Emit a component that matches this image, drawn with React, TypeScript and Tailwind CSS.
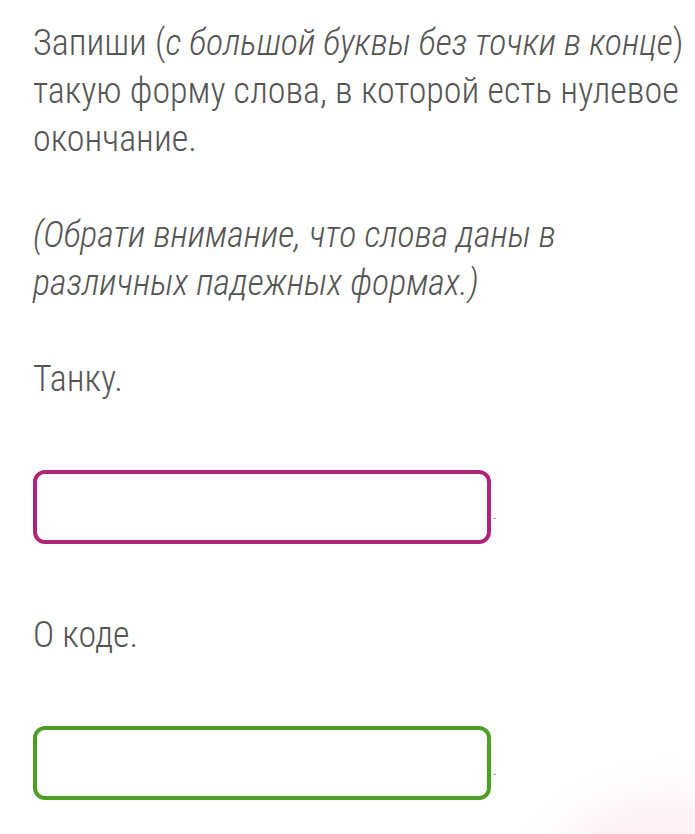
import React from 'react';

// answer box with the trailing period
const AnswerBox = ({ color }: { color: string }) => (
  <div className="flex items-center">
    <div className={`w-[458px] h-[74px] rounded-[12px] border-[4px] ${color}`} />
    <span className="text-[14px] leading-none pt-[14px] pl-[2px] text-[#333]">.</span>
  </div>
);

export default function App() {
  return (
    <div className="relative w-[695px] h-[834px] overflow-hidden bg-white text-[#555] font-[family-name:'Roboto_Condensed',Roboto,sans-serif] font-light text-[36px] leading-[48px]">
      <div className="relative px-[33px] pt-[19px]">
        <p className="whitespace-nowrap">
          Запиши (<i>с большой буквы без точки в конце</i>)
          <br />
          такую форму слова, в которой есть нулевое
          <br />
          окончание.
        </p>
        <p className="mt-[48px] italic whitespace-nowrap">
          (Обрати внимание, что слова даны в
          <br />
          различных падежных формах.)
        </p>
        <p className="mt-[48px]">Танку.</p>
        <div className="mt-[67px]">
          <AnswerBox color="border-[#b0237a]" />
        </div>
        <p className="mt-[67px]">О коде.</p>
        <div className="mt-[67px]">
          <AnswerBox color="border-[#4d9e25]" />
        </div>
      </div>
      <div className="absolute left-[520px] top-[790px] w-[300px] h-[300px] rounded-full bg-[#fdf1f4] blur-[20px]" />
    </div>
  );
}
